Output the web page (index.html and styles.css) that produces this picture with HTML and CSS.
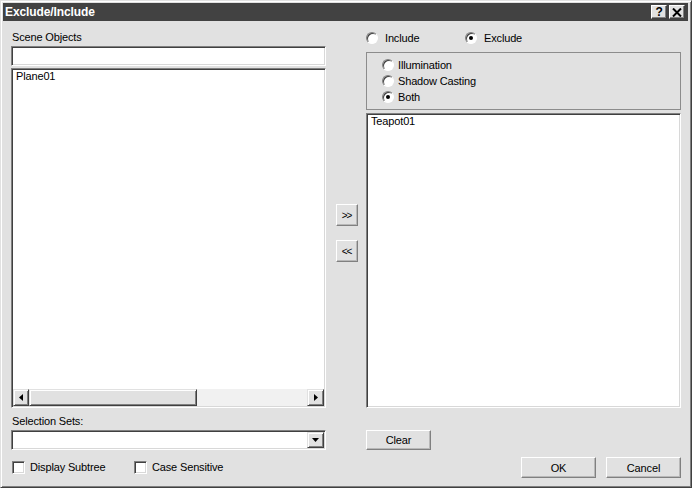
FILE: index.html
```html
<!DOCTYPE html>
<html>
<head>
<meta charset="utf-8">
<link rel="stylesheet" href="styles.css">
</head>
<body>
<div class="window">
  <div class="titlebar">
    <span class="title">Exclude/Include</span>
    <div class="tbtns">
      <span class="tbtn help">?</span>
      <span class="tbtn close"><svg width="10" height="9" viewBox="0 0 10 9"><path d="M1 0.5 L9 8.5 M9 0.5 L1 8.5" stroke="#000" stroke-width="2" fill="none"/></svg></span>
    </div>
  </div>
  <div class="content">
    <div class="left">
      <div class="label lbl-scene">Scene Objects</div>
      <div class="sunken field search"></div>
      <div class="sunken listbox left-list">
        <div class="items"><div class="item">Plane01</div></div>
        <div class="hscroll">
          <div class="raised sbtn sbtn-left"><svg width="4" height="7" viewBox="0 0 4 7"><path d="M4 0 L0 3.5 L4 7 Z" fill="#000"/></svg></div>
          <div class="raised thumb"></div>
          <div class="track"></div>
          <div class="raised sbtn sbtn-right"><svg width="4" height="7" viewBox="0 0 4 7"><path d="M0 0 L4 3.5 L0 7 Z" fill="#000"/></svg></div>
        </div>
      </div>
      <div class="label lbl-sets">Selection Sets:</div>
      <div class="sunken field combo">
        <div class="raised combo-btn"><svg width="7" height="4" viewBox="0 0 7 4"><path d="M0 0 L7 0 L3.5 4 Z" fill="#000"/></svg></div>
      </div>
      <div class="checks">
        <label class="check check-first"><span class="box"></span><span>Display Subtree</span></label>
        <label class="check"><span class="box"></span><span>Case Sensitive</span></label>
      </div>
    </div>
    <div class="middle">
      <div class="raised btn arrow-btn">&gt;&gt;</div>
      <div class="raised btn arrow-btn">&lt;&lt;</div>
    </div>
    <div class="right">
      <div class="mode-row">
        <label class="radio radio-include"><span class="dot"></span><span>Include</span></label>
        <label class="radio"><span class="dot on"></span><span>Exclude</span></label>
      </div>
      <div class="group">
        <label class="radio grp-radio"><span class="dot"></span><span>Illumination</span></label>
        <label class="radio grp-radio"><span class="dot"></span><span>Shadow Casting</span></label>
        <label class="radio grp-radio"><span class="dot on"></span><span>Both</span></label>
      </div>
      <div class="sunken listbox right-list">
        <div class="items"><div class="item">Teapot01</div></div>
      </div>
      <div class="raised btn clear-btn">Clear</div>
      <div class="actions">
        <div class="raised btn action-btn">OK</div>
        <div class="raised btn action-btn">Cancel</div>
      </div>
    </div>
  </div>
</div>
</body>
</html>
```
FILE: styles.css
```css
html, body {
  margin: 0;
  padding: 0;
  background: #e1e1e1;
}
body {
  font-family: "Liberation Sans", Arial, sans-serif;
  font-size: 11px;
  letter-spacing: -0.15px;
  color: #000;
}
.window {
  width: 692px;
  height: 488px;
  box-sizing: border-box;
  background: #e1e1e1;
  border: 1px solid;
  border-color: #e1e1e1 #404040 #404040 #e1e1e1;
  box-shadow: inset 1px 1px #ffffff, inset -1px -1px #808080;
  padding: 2px;
  display: flex;
  flex-direction: column;
}
.titlebar {
  height: 18px;
  margin-right: 1px;
  background: #424242;
  display: flex;
  align-items: center;
  justify-content: space-between;
  padding: 0 3px 0 2px;
}
.title {
  color: #fff;
  font-weight: bold;
  font-size: 12px;
  letter-spacing: -0.1px;
}
.tbtns {
  display: flex;
  gap: 2px;
}
.tbtn {
  width: 16px;
  height: 14px;
  box-sizing: border-box;
  background: #e1e1e1;
  border: 1px solid;
  border-color: #fff #404040 #404040 #fff;
  box-shadow: inset -1px -1px #808080;
  display: flex;
  align-items: center;
  justify-content: center;
  font-weight: bold;
  font-size: 12px;
  line-height: 12px;
}
.content {
  display: flex;
  padding-left: 8px;
}
.left {
  width: 315px;
  display: flex;
  flex-direction: column;
}
.label {
  line-height: 14px;
  height: 14px;
  padding-left: 1px;
}
.lbl-scene { margin-top: 9px; }
.lbl-sets { margin-top: 6px; }
.sunken {
  box-sizing: border-box;
  background: #fff;
  border: 1px solid;
  border-color: #808080 #fff #fff #808080;
  box-shadow: inset 1px 1px #404040, inset -1px -1px #d8d8d8;
}
.field {
  height: 20px;
  margin-top: 2px;
  padding: 1px;
}
.listbox {
  display: flex;
  flex-direction: column;
  padding: 1px;
}
.left-list {
  margin-top: 2px;
  height: 340px;
}
.items {
  flex: 1;
  padding: 1px 2px 0 3px;
}
.item {
  line-height: 13px;
  margin-top: -1px;
}
.hscroll {
  height: 17px;
  display: flex;
  background: #f1f1f1;
}
.raised {
  box-sizing: border-box;
  background: #e1e1e1;
  border: 1px solid;
  border-color: #fff #808080 #808080 #fff;
}
.sbtn {
  display: flex;
  align-items: center;
  justify-content: center;
  border-color: #e1e1e1 #404040 #404040 #e1e1e1;
  box-shadow: inset 1px 1px #fff, inset -1px -1px #808080;
}
.sbtn-left { width: 16px; }
.sbtn-right { width: 17px; }
.thumb {
  width: 168px;
  border-color: #e1e1e1 #404040 #404040 #e1e1e1;
  box-shadow: inset 1px 1px #fff, inset -1px -1px #808080;
}
.track { flex: 1; }
.combo {
  display: flex;
  justify-content: flex-end;
}
.combo-btn {
  width: 17px;
  height: 16px;
  display: flex;
  align-items: center;
  justify-content: center;
  border-color: #e1e1e1 #404040 #404040 #e1e1e1;
  box-shadow: inset 1px 1px #fff, inset -1px -1px #808080;
}
.checks {
  margin-top: 10px;
  display: flex;
  padding-left: 1px;
  height: 14px;
}
.check {
  display: flex;
  align-items: center;
  gap: 5px;
}
.check-first { width: 122px; }
.box {
  width: 13px;
  height: 13px;
  box-sizing: border-box;
  background: #fff;
  border: 1px solid;
  border-color: #808080 #fff #fff #808080;
  box-shadow: inset 1px 1px #404040, inset -1px -1px #d8d8d8;
}
.middle {
  width: 40px;
  padding-top: 183px;
  padding-left: 10px;
  box-sizing: border-box;
  display: flex;
  flex-direction: column;
  gap: 14px;
}
.btn {
  display: flex;
  align-items: center;
  justify-content: center;
  border-color: #fff #808080 #808080 #fff;
  box-shadow: inset -1px -1px #b8b8b8;
}
.arrow-btn {
  width: 22px;
  height: 22px;
  font-size: 10px;
  letter-spacing: -1px;
  padding-right: 1px;
}
.right {
  width: 315px;
  display: flex;
  flex-direction: column;
}
.mode-row {
  margin-top: 10px;
  height: 14px;
  display: flex;
  align-items: center;
}
.radio {
  display: flex;
  align-items: center;
  gap: 7px;
  height: 14px;
}
.radio-include { width: 99px; }
.dot {
  width: 12px;
  height: 12px;
  box-sizing: border-box;
  border-radius: 50%;
  background: #fff;
  border: 1px solid;
  border-color: #808080 #fff #fff #808080;
  box-shadow: inset 1px 1px #404040;
  display: flex;
  align-items: center;
  justify-content: center;
}
.dot.on::after {
  content: "";
  width: 4px;
  height: 4px;
  border-radius: 50%;
  background: #000;
}
.group {
  margin-top: 7px;
  height: 58px;
  box-sizing: border-box;
  border: 1px solid #8c8c8c;
  padding: 4px 0 0 15px;
  display: flex;
  flex-direction: column;
}
.grp-radio {
  height: 16px;
  gap: 4px;
}
.right-list {
  margin-top: 3px;
  height: 295px;
}
.clear-btn {
  margin-top: 22px;
  width: 65px;
  height: 20px;
}
.actions {
  margin-top: 7px;
  display: flex;
  justify-content: flex-end;
  gap: 10px;
}
.action-btn {
  width: 75px;
  height: 21px;
}
```
